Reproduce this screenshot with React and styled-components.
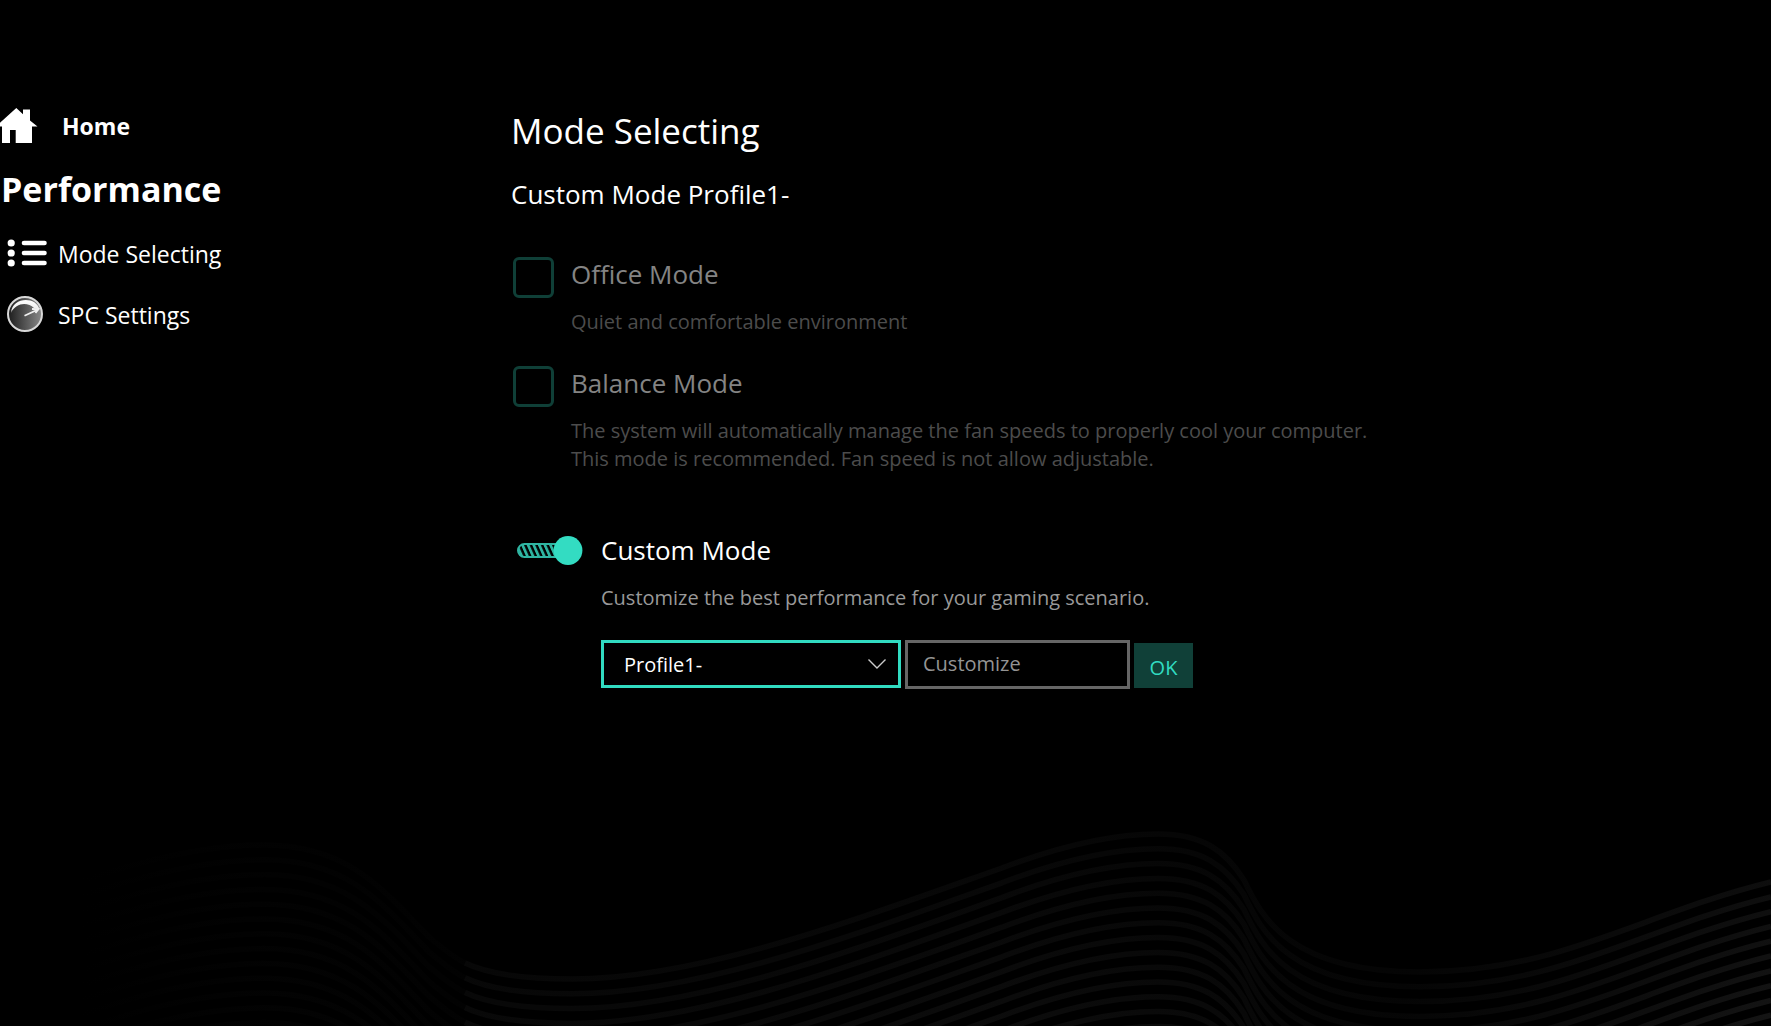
import React, { useState } from 'react';
import styled, { createGlobalStyle } from 'styled-components';

const GlobalStyle = createGlobalStyle`
* {
  box-sizing: border-box;
}
body {
  margin: 0;
  background: #000;
  color: #fff;
  font-family: "Segoe UI", "Open Sans", sans-serif;
}
`;

const Page = styled.div`
  position: relative;
  min-height: 100vh;
  display: grid;
  grid-template-columns: 511px 1fr;
  overflow: hidden;
`;

const Waves = styled.svg`
  position: absolute;
  left: 0;
  bottom: 0;
  width: 100%;
  pointer-events: none;
`;

const Sidebar = styled.nav`
  position: relative;
  padding-top: 108px;
`;

const HomeLink = styled.a`
  display: flex;
  align-items: center;
  gap: 24px;
  font-size: 23px;
  line-height: 36px;
  font-weight: 700;
  color: #fff;
  text-decoration: none;
`;

const SectionTitle = styled.h2`
  margin: 22px 0 24px;
  padding-left: 1px;
  font-size: 34px;
  line-height: 46px;
  font-weight: 700;
`;

const Menu = styled.div`
  display: flex;
  flex-direction: column;
  gap: 24px;
`;

const MenuLink = styled.a`
  display: flex;
  align-items: center;
  gap: 11px;
  padding-left: 7px;
  font-size: 23px;
  line-height: 36px;
  color: #fff;
  text-decoration: none;
`;

const Main = styled.main`
  position: relative;
  padding: 107px 40px 40px 0;
`;

const Title = styled.h1`
  margin: 0;
  font-size: 35px;
  line-height: 48px;
  font-weight: 400;
`;

const Current = styled.p`
  margin: 21px 0 44px;
  font-size: 26px;
  line-height: 36px;
`;

const Options = styled.div`
  display: flex;
  flex-direction: column;
  gap: 29px;
`;

const Option = styled.div`
  display: flex;
  align-items: flex-start;
  gap: 17px;
  padding-left: 2px;
`;

const CustomOption = styled(Option)`
  gap: 18px;
  margin-top: 59px;
  padding-left: 6px;
`;

const CheckBox = styled.input`
  appearance: none;
  flex: none;
  width: 41px;
  height: 41px;
  margin: 1px 0 0;
  border: 3px solid #0f3f37;
  border-radius: 6px;

  &:checked {
    background: #0f3f37;
  }
`;

const ModeName = styled.label`
  display: block;
  font-size: 26px;
  line-height: 36px;
  color: ${(props) => (props.$active ? '#fff' : '#848484')};
`;

const ModeText = styled.p`
  max-width: 820px;
  margin: 16px 0 0;
  font-size: 20px;
  line-height: 28px;
  color: ${(props) => (props.$active ? '#999' : '#4c4c4c')};
`;

const Toggle = styled.span`
  position: relative;
  display: flex;
  flex: none;
  width: 66px;
  margin-top: 4px;
`;

const ToggleInput = styled.input`
  position: absolute;
  inset: 0;
  width: 100%;
  height: 100%;
  margin: 0;
  opacity: 0;
  cursor: pointer;
`;

const Form = styled.form`
  display: flex;
  align-items: flex-start;
  gap: 4px;
  margin-top: 28px;
`;

const SelectBox = styled.div`
  position: relative;
  width: 300px;
`;

const Select = styled.select`
  appearance: none;
  display: block;
  width: 100%;
  height: 48px;
  padding: 0 48px 0 20px;
  border: 3px solid #31dbc1;
  border-radius: 0;
  background: #000;
  color: #fff;
  font: inherit;
  font-size: 20px;
`;

const Chevron = styled.svg`
  position: absolute;
  top: 18px;
  right: 14px;
  pointer-events: none;
`;

const NameInput = styled.input`
  width: 225px;
  height: 49px;
  padding: 0 15px 2px;
  border: 3px solid #666;
  border-radius: 0;
  background: #000;
  color: #fff;
  font: inherit;
  font-size: 20px;

  &::placeholder {
    color: #949494;
    opacity: 1;
  }
`;

const OkButton = styled.button`
  width: 59px;
  height: 45px;
  margin-top: 3px;
  padding: 4px 0 0;
  border: 0;
  background: #104038;
  color: #31dbc1;
  font: inherit;
  font-size: 20px;
  cursor: pointer;
`;

const HomeIcon = () => (
  <svg width="38" height="36" viewBox="0 0 38 36" fill="#fff" aria-hidden="true">
    <path d="M-4 18.5 L16.3 0 L23 6.3 V1.4 H30 V12.4 L37.5 18.5 H32 V35 H15.7 V22 H10 V35 H2 V18.5 Z" />
  </svg>
);

const ListIcon = () => (
  <svg width="40" height="32" viewBox="0 0 40 32" aria-hidden="true">
    {[5, 15, 25].map((y) => (
      <g key={y}>
        <circle cx="4.2" cy={y} r="3.6" fill="#fff" />
        <path d={`M17 ${y} H37.5`} stroke="#fff" strokeWidth="4.6" strokeLinecap="round" />
      </g>
    ))}
  </svg>
);

const GaugeIcon = () => (
  <svg width="40" height="38" viewBox="0 0 40 38" aria-hidden="true">
    <defs>
      <linearGradient id="gauge" x1="0" y1="0" x2="1" y2="0">
        <stop offset="0" stopColor="#1c1c1c" />
        <stop offset="1" stopColor="#8a8a8a" />
      </linearGradient>
      <linearGradient id="shine" x1="0" y1="0" x2="0" y2="1">
        <stop offset="0" stopColor="#fff" />
        <stop offset="0.7" stopColor="#eee" />
        <stop offset="1" stopColor="#888" />
      </linearGradient>
    </defs>
    <circle cx="18" cy="18" r="17" fill="url(#gauge)" stroke="#d8d8d8" strokeWidth="2" />
    <path d="M4 17 C5 1 29 0 32.5 13.5 L27 12 C21 6 9 6 4 17 Z" fill="url(#shine)" />
    <path d="M17.5 19.8 L31 13.5 M25 13 L31.5 13.2 L28.5 17" fill="none" stroke="#f0f0f0" strokeWidth="1.8" />
  </svg>
);

const ToggleIcon = ({ on }) => (
  <svg width="66" height="30" viewBox="0 0 66 30" aria-hidden="true">
    <defs>
      <pattern id="stripes" width="5.6" height="15" patternUnits="userSpaceOnUse" patternTransform="skewX(24)">
        <rect width="3" height="15" fill="#2eb5a1" />
      </pattern>
    </defs>
    <rect x="1" y="8" width="60" height="13" rx="6.5" fill="url(#stripes)" stroke="#2fb5a2" strokeWidth="2" />
    <circle cx={on ? 51 : 15} cy="14.5" r="14.4" fill="#33dcc2" />
  </svg>
);

const LEFT_WAVE = 'M0 87 C100 44 190 19 264 19 C350 19 385 66 429 111 C442 122 453 131 465 137';
const RIGHT_WAVE =
  'M465 137 C490 149 530 153 572 153 C700 153 860 92 1002 42 C1060 20 1110 8 1158 8 C1202 8 1225 24 1244 54 C1262 92 1290 146 1420 146 C1560 146 1640 88 1771 56';
const LINES = Array.from({ length: 14 }, (_, i) => i);

const Background = () => (
  <Waves viewBox="0 0 1771 200" fill="none" aria-hidden="true">
    <defs>
      <linearGradient id="leftFade" gradientUnits="userSpaceOnUse" x1="80" y1="0" x2="465" y2="0">
        <stop offset="0" stopColor="#000" />
        <stop offset="0.5" stopColor="#030303" />
        <stop offset="1" stopColor="#030303" />
      </linearGradient>
      <linearGradient id="rightFade" gradientUnits="userSpaceOnUse" x1="465" y1="0" x2="1771" y2="0">
        <stop offset="0" stopColor="#0c0c0c" />
        <stop offset="0.4" stopColor="#0d0d0d" />
        <stop offset="0.54" stopColor="#0a0a0a" />
        <stop offset="0.72" stopColor="#080808" />
        <stop offset="1" stopColor="#171717" />
      </linearGradient>
    </defs>
    {LINES.map((i) => (
      <g key={i} transform={`translate(0 ${i * 14.8})`} strokeWidth="5.5" strokeOpacity={0.6 + i * 0.03}>
        <path d={LEFT_WAVE} stroke="url(#leftFade)" />
        <path d={RIGHT_WAVE} stroke="url(#rightFade)" />
      </g>
    ))}
  </Waves>
);

const modes = [
  { id: 'office', name: 'Office Mode', lines: ['Quiet and comfortable environment'] },
  {
    id: 'balance',
    name: 'Balance Mode',
    lines: [
      'The system will automatically manage the fan speeds to properly cool your computer.',
      'This mode is recommended. Fan speed is not allow adjustable.',
    ],
  },
];

const App = () => {
  const [custom, setCustom] = useState(true);
  const [name, setName] = useState('');

  return (
    <>
      <GlobalStyle />
      <Page>
        <Background />
        <Sidebar>
          <HomeLink href="#home">
            <HomeIcon />
            Home
          </HomeLink>
          <SectionTitle>Performance</SectionTitle>
          <Menu>
            <MenuLink href="#mode">
              <ListIcon />
              Mode Selecting
            </MenuLink>
            <MenuLink href="#spc">
              <GaugeIcon />
              SPC Settings
            </MenuLink>
          </Menu>
        </Sidebar>

        <Main>
          <Title>Mode Selecting</Title>
          <Current>Custom Mode Profile1-</Current>

          <Options>
            {modes.map((mode) => (
              <Option key={mode.id}>
                <CheckBox type="checkbox" id={mode.id} disabled={custom} />
                <div>
                  <ModeName htmlFor={mode.id}>{mode.name}</ModeName>
                  <ModeText>
                    {mode.lines.map((line, i) => (
                      <React.Fragment key={line}>
                        {i > 0 && <br />}
                        {line}
                      </React.Fragment>
                    ))}
                  </ModeText>
                </div>
              </Option>
            ))}
          </Options>

          <CustomOption>
            <Toggle>
              <ToggleIcon on={custom} />
              <ToggleInput
                type="checkbox"
                id="custom"
                checked={custom}
                onChange={(e) => setCustom(e.target.checked)}
              />
            </Toggle>
            <div>
              <ModeName htmlFor="custom" $active>Custom Mode</ModeName>
              <ModeText $active>Customize the best performance for your gaming scenario.</ModeText>
              <Form onSubmit={(e) => e.preventDefault()}>
                <SelectBox>
                  <Select aria-label="Profile">
                    <option>Profile1-</option>
                  </Select>
                  <Chevron width="20" height="12" viewBox="0 0 20 12" fill="none" aria-hidden="true">
                    <path d="M1.5 1.5 L10 10 L18.5 1.5" stroke="#ccc" strokeWidth="1.4" />
                  </Chevron>
                </SelectBox>
                <NameInput
                  aria-label="Profile name"
                  placeholder="Customize"
                  value={name}
                  onChange={(e) => setName(e.target.value)}
                />
                <OkButton type="submit">OK</OkButton>
              </Form>
            </div>
          </CustomOption>
        </Main>
      </Page>
    </>
  );
};

export default App;
